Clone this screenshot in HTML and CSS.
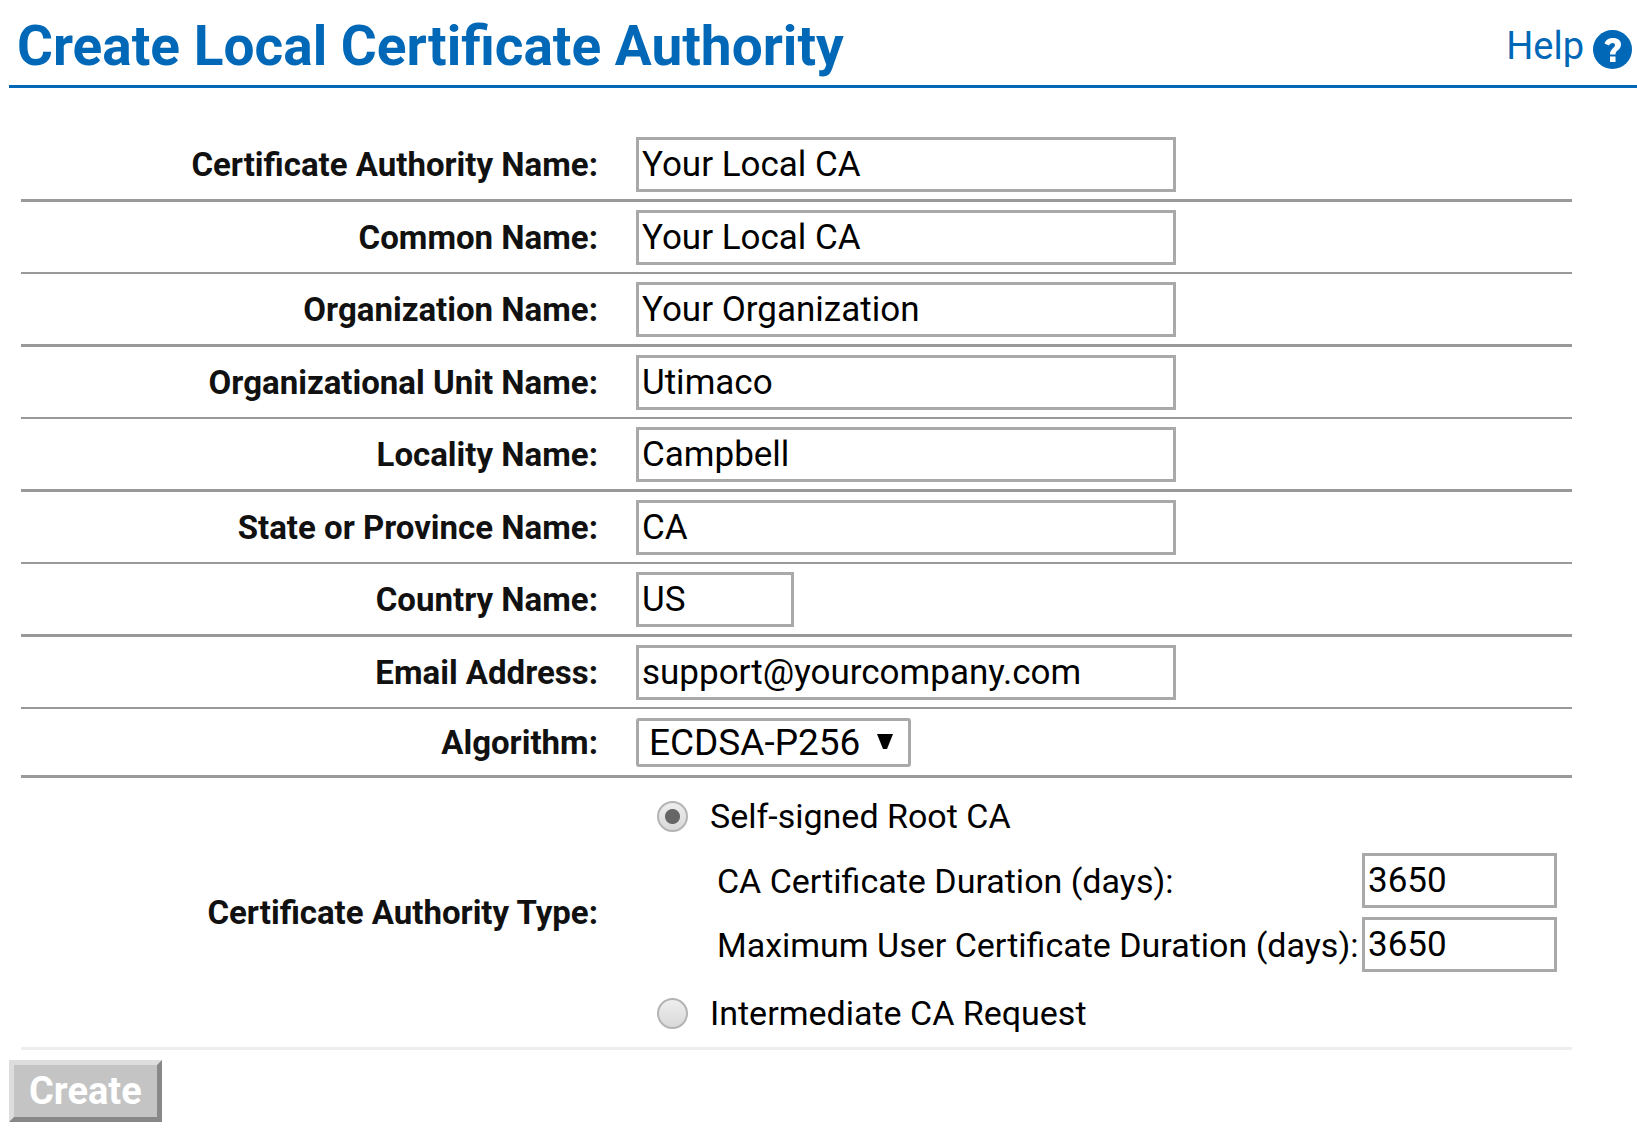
FILE: index.html
```html
<!DOCTYPE html>
<html lang="en">
<head>
<meta charset="UTF-8">
<meta name="viewport" content="width=device-width, initial-scale=1">
<title>Create Local Certificate Authority</title>
<link rel="stylesheet" href="styles.css">
</head>
<body>
  <header class="page-header">
    <h1>Create Local Certificate Authority</h1>
    <a class="help" href="#help">
      Help
      <svg class="help-icon" viewBox="0 0 39 39" aria-hidden="true">
        <circle cx="19.500" cy="19.500" r="19.500" fill="#0068b7"/>
        <path d="M11.500 13.500C13 9.500 16 8 20 8C25 8 28 10.500 28 14.500C28 20 22.500 20 22.500 24.500H17C17 18.500 22 18 22 15C22 12.500 18 12 16 15.500Z" fill="#fff"/>
        <rect x="17" y="26.500" width="5.500" height="5.500" fill="#fff"/>
      </svg>
    </a>
  </header>

  <form class="ca-form">
    <div class="rows">
      <div class="row">
        <label for="ca-name">Certificate Authority Name:</label>
        <input type="text" id="ca-name" value="Your Local CA">
      </div>
      <div class="row">
        <label for="common-name">Common Name:</label>
        <input type="text" id="common-name" value="Your Local CA">
      </div>
      <div class="row">
        <label for="org-name">Organization Name:</label>
        <input type="text" id="org-name" value="Your Organization">
      </div>
      <div class="row">
        <label for="org-unit">Organizational Unit Name:</label>
        <input type="text" id="org-unit" value="Utimaco">
      </div>
      <div class="row">
        <label for="locality">Locality Name:</label>
        <input type="text" id="locality" value="Campbell">
      </div>
      <div class="row">
        <label for="state">State or Province Name:</label>
        <input type="text" id="state" value="CA">
      </div>
      <div class="row">
        <label for="country">Country Name:</label>
        <input type="text" id="country" class="input-country" value="US">
      </div>
      <div class="row">
        <label for="email">Email Address:</label>
        <input type="text" id="email" value="support@yourcompany.com">
      </div>
      <div class="row row-algorithm">
        <label for="algorithm">Algorithm:</label>
        <div class="select">
          <select id="algorithm">
            <option>ECDSA-P256</option>
          </select>
          <svg class="arrow" viewBox="0 0 16 16" aria-hidden="true"><path d="M0 0H16L10 15H6Z"/></svg>
        </div>
      </div>
      <div class="row row-type" role="radiogroup" aria-labelledby="type-label">
        <span id="type-label" class="row-label">Certificate Authority Type:</span>
        <div class="type">
          <div class="option">
            <input type="radio" name="type" id="type-root" checked>
            <label for="type-root">Self-signed Root CA</label>
          </div>
          <div class="durations">
            <label for="ca-days">CA Certificate Duration (days):</label>
            <input type="text" id="ca-days" value="3650">
            <label for="user-days">Maximum User Certificate Duration (days):</label>
            <input type="text" id="user-days" value="3650">
          </div>
          <div class="option">
            <input type="radio" name="type" id="type-intermediate">
            <label for="type-intermediate">Intermediate CA Request</label>
          </div>
        </div>
      </div>
    </div>
    <button type="submit" class="create">Create</button>
  </form>
</body>
</html>
```
FILE: styles.css
```css
:root {
  --blue: #0068b7;
  --border: #a9a9a9;
  --line: #999;
}

* {
  box-sizing: border-box;
}

body {
  margin: 0;
  padding-left: 9px;
  background: #fff;
  color: #111;
  font-family: Roboto, Arial, sans-serif;
  font-size: 33px;
}

.page-header {
  display: flex;
  justify-content: space-between;
  align-items: center;
  height: 88px;
  padding: 6px 5px 0 8px;
  border-bottom: 3px solid var(--blue);
  color: var(--blue);
}

h1 {
  margin: 0;
  font-size: 55px;
  font-weight: 700;
  white-space: nowrap;
}

.help {
  display: flex;
  align-items: center;
  gap: 9px;
  color: var(--blue);
  font-size: 38px;
  text-decoration: none;
}

.help-icon {
  width: 39px;
  height: 39px;
  margin-top: 8px;
}

.rows {
  margin: 41px 65px 10px 12px;
}

.row {
  display: grid;
  grid-template-columns: 37.2% 1fr;
  column-gap: 38px;
  align-items: center;
  height: 73px;
  border-bottom: 3px solid var(--line);
}

.row:nth-child(even) {
  height: 72px;
  border-bottom-width: 2px;
}

.row > label,
.row-label {
  font-weight: 700;
  text-align: right;
  white-space: nowrap;
}

input[type="text"],
select {
  border: 3px solid var(--border);
  background: #fff;
  color: #000;
  font-family: inherit;
  font-size: 35px;
}

input[type="text"] {
  width: 540px;
  max-width: 100%;
  height: 55px;
  padding: 0 3px;
}

.row .input-country {
  width: 158px;
}

.row.row-algorithm {
  height: 69px;
}

.select {
  display: grid;
  width: 275px;
  align-items: center;
}

.select select,
.arrow {
  grid-area: 1 / 1;
}

select {
  width: 100%;
  height: 49px;
  padding: 0 10px;
  border-radius: 3px;
  font-size: 37px;
  appearance: none;
}

.arrow {
  justify-self: end;
  width: 16px;
  height: 16px;
  margin-right: 18px;
  pointer-events: none;
}

.row.row-type {
  height: auto;
  border-bottom: 3px solid #eee;
}

.type {
  padding-top: 4px;
  color: #000;
  font-size: 34px;
}

.option {
  display: flex;
  align-items: center;
  gap: 22px;
  height: 68px;
  padding-left: 21px;
}

input[type="radio"] {
  width: 31px;
  height: 31px;
  margin: 0;
  border: 2px solid #b4b4b4;
  border-radius: 50%;
  background: linear-gradient(#eee, #d9d9d9);
  appearance: none;
}

input[type="radio"]:checked {
  background: radial-gradient(circle, #666 7px, transparent 8px), linear-gradient(#eee, #d9d9d9);
}

.durations {
  display: grid;
  grid-template-columns: 1fr 195px;
  align-items: center;
  row-gap: 9px;
  margin: 3px 15px 7px 81px;
  white-space: nowrap;
}

.create {
  display: block;
  height: 62px;
  padding: 0 15px;
  border: 5px solid;
  border-color: #ddd #888 #888 #ddd;
  background: #c4c4c4;
  color: #fff;
  font-family: inherit;
  font-size: 38px;
  font-weight: 700;
}
```
